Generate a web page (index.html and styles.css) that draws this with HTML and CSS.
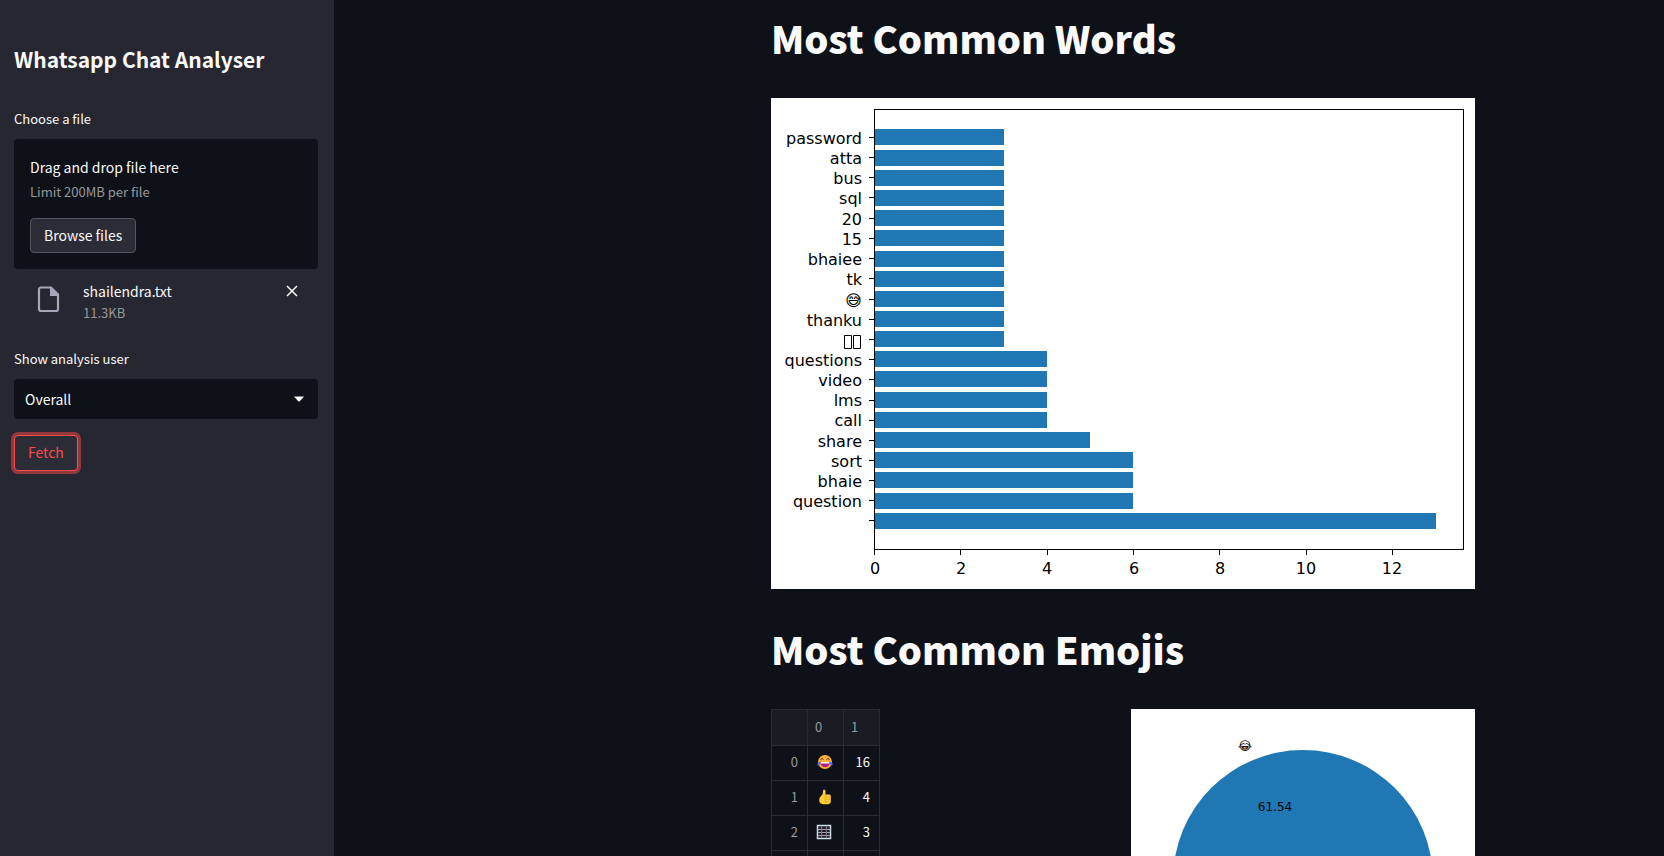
FILE: index.html
```html
<!DOCTYPE html>
<html lang="en">
<head>
<meta charset="utf-8">
<title>Whatsapp Chat Analyser</title>
<link rel="stylesheet" href="styles.css">
</head>
<body>
<div class="app">
  <aside class="sidebar">
    <h1 class="sidebar-title">Whatsapp Chat Analyser</h1>

    <p class="field-label" id="upload-label">Choose a file</p>
    <section class="dropzone" aria-labelledby="upload-label">
      <p class="drop-text">Drag and drop file here</p>
      <p class="drop-limit">Limit 200MB per file</p>
      <button class="button" type="button">Browse files</button>
    </section>
    <div class="file">
      <svg class="file-icon" viewBox="0 0 24 28" aria-hidden="true">
        <path d="M4 2.5h10l7 7v14.500a2 2 0 0 1-2 2H4a2 2 0 0 1-2-2v-19.500a2 2 0 0 1 2-2z" fill="none" stroke="#a3a8b8" stroke-width="2.200"/>
        <path d="M13 2v9h8.500z" fill="#a3a8b8"/>
      </svg>
      <div class="file-info">
        <p class="file-name">shailendra.txt</p>
        <p class="file-size">11.3KB</p>
      </div>
      <button class="file-remove" type="button" aria-label="Remove file">
        <svg viewBox="0 0 12 12" aria-hidden="true"><path d="M1 1l10 10M11 1L1 11" stroke="#fafafa" stroke-width="1.500"/></svg>
      </button>
    </div>

    <label class="field-label" for="user">Show analysis user</label>
    <div class="select">
      <select id="user"><option>Overall</option></select>
      <svg class="select-arrow" viewBox="0 0 10 6" aria-hidden="true"><path d="M0 .5h10L6 5q-1 1-2 0z" fill="#fafafa"/></svg>
    </div>
    <button class="button button-focus" type="button">Fetch</button>
  </aside>

  <main class="main">
    <div class="content">
      <h2 class="heading">Most Common Words</h2>
      <svg class="figure" viewBox="0 0 704 491" role="img" aria-label="Most common words">
        <rect width="704" height="491" fill="#fff"/>
        <g fill="#1f77b4">
          <rect x="103" y="31" width="130" height="16"/>
          <rect x="103" y="52" width="130" height="16"/>
          <rect x="103" y="72" width="130" height="16"/>
          <rect x="103" y="92" width="130" height="16"/>
          <rect x="103" y="112" width="130" height="16"/>
          <rect x="103" y="132" width="130" height="16"/>
          <rect x="103" y="153" width="130" height="16"/>
          <rect x="103" y="173" width="130" height="16"/>
          <rect x="103" y="193" width="130" height="16"/>
          <rect x="103" y="213" width="130" height="16"/>
          <rect x="103" y="233" width="130" height="16"/>
          <rect x="103" y="253" width="173" height="16"/>
          <rect x="103" y="273" width="173" height="16"/>
          <rect x="103" y="294" width="173" height="16"/>
          <rect x="103" y="314" width="173" height="16"/>
          <rect x="103" y="334" width="216" height="16"/>
          <rect x="103" y="354" width="259" height="16"/>
          <rect x="103" y="374" width="259" height="16"/>
          <rect x="103" y="395" width="259" height="16"/>
          <rect x="103" y="415" width="562" height="16"/>
        </g>
        <g class="axis">
          <rect x="103.500" y="11.500" width="589" height="440"/>
          <path d="M98 39.500h5M98 59.500h5M98 79.500h5M98 99.500h5M98 120.500h5M98 140.500h5M98 160.500h5M98 180.500h5M98 201.500h5M98 221.500h5M98 241.500h5M98 261.500h5M98 281.500h5M98 302.500h5M98 322.500h5M98 342.500h5M98 362.500h5M98 382.500h5M98 402.500h5M98 422.500h5"/>
          <path d="M103.500 452v5M189.500 452v5M276.500 452v5M362.500 452v5M448.500 452v5M535.500 452v5M621.500 452v5"/>
        </g>
        <g class="tick tick-y">
          <text x="91" y="46">password</text>
          <text x="91" y="66">atta</text>
          <text x="91" y="86">bus</text>
          <text x="91" y="106">sql</text>
          <text x="91" y="127">20</text>
          <text x="91" y="147">15</text>
          <text x="91" y="167">bhaiee</text>
          <text x="91" y="187">tk</text>
          <text x="91" y="208">😅</text>
          <text x="91" y="228">thanku</text>
          <text x="91" y="268">questions</text>
          <text x="91" y="288">video</text>
          <text x="91" y="308">lms</text>
          <text x="91" y="328">call</text>
          <text x="91" y="349">share</text>
          <text x="91" y="369">sort</text>
          <text x="91" y="389">bhaie</text>
          <text x="91" y="409">question</text>
        </g>
        <path class="missing" d="M73.500 237.500h7v13h-7zM82.500 237.500h7v13h-7z"/>
        <g class="tick tick-x">
          <text x="104" y="476">0</text>
          <text x="190" y="476">2</text>
          <text x="276" y="476">4</text>
          <text x="363" y="476">6</text>
          <text x="449" y="476">8</text>
          <text x="535" y="476">10</text>
          <text x="621" y="476">12</text>
        </g>
      </svg>

      <h2 class="heading">Most Common Emojis</h2>
      <div class="columns">
        <div>
          <table class="table">
            <thead>
              <tr><th></th><th>0</th><th>1</th></tr>
            </thead>
            <tbody>
              <tr>
                <th>0</th>
                <td><svg class="emoji" viewBox="0 0 16 16" role="img" aria-label="Face with tears of joy">
                  <circle cx="8" cy="8" r="7" fill="#fdae33"/>
                  <path d="M3.500 5.500q1.500-2 3 0M9.500 5.500q1.500-2 3 0" fill="none" stroke="#5c2f1b"/>
                  <path d="M3.500 8h9q0 5-4.500 5t-4.500-5z" fill="#b5178c"/>
                  <path d="M4 8h8v1.500H4z" fill="#fff"/>
                  <path d="M3.500 7.500q0 4-2 4Q0 11.500.5 9.500q1-1.500 3-2zM12.500 7.500q0 4 2 4 1.500 0 1-2-1-1.500-3-2z" fill="#4a72f0"/>
                </svg></td>
                <td>16</td>
              </tr>
              <tr>
                <th>1</th>
                <td><svg class="emoji" viewBox="0 0 16 16" role="img" aria-label="Thumbs up">
                  <path d="M6 1q2-1.500 2.500 1L8.500 5.500h4q1.500.3 1.300 1.800V13q-.3 2-2.500 2.200H6Q2 15 2.200 11q0-3 2.300-4.500Q6.500 4.500 6 1z" fill="#fdcb32"/>
                  <path d="M8.500 8h5M8.500 10.500h5M8.500 13h5M8.500 6q-1.500 4 0 8" fill="none" stroke="#e39d23" stroke-width=".6"/>
                </svg></td>
                <td>4</td>
              </tr>
              <tr>
                <th>2</th>
                <td><svg class="emoji emoji-start" viewBox="0 0 16 16" role="img" aria-label="Light skin tone">
                  <rect x="1.500" y="1.500" width="13" height="13" fill="#24202b" stroke="#c9dbe2" stroke-width="1.500"/>
                  <path d="M2 5.500h12M2 8.500h12M2 11.500h12" stroke="#a9a2b4"/>
                  <path d="M5.500 2v12M10.500 2v12" stroke="#7d7489"/>
                </svg></td>
                <td>3</td>
              </tr>
              <tr><th></th><td></td><td></td></tr>
            </tbody>
          </table>
        </div>
        <svg class="figure" viewBox="0 0 344 344" role="img" aria-label="Most common emojis">
          <rect width="344" height="344" fill="#fff"/>
          <circle cx="172" cy="171" r="130" fill="#1f77b4"/>
          <text class="pie-text pie-label" x="121" y="41">😂</text>
          <text class="pie-text pie-value" x="144" y="102">61.54</text>
        </svg>
      </div>
    </div>
  </main>
</div>
</body>
</html>
```
FILE: styles.css
```css
* { box-sizing: border-box; }

body, h1, h2, p { margin: 0; }

body {
  background: #0e1117;
  color: #fafafa;
  font-family: "Source Sans Pro", "Noto Sans CJK JP", sans-serif;
  font-size: 14px;
  line-height: 20px;
}

button, select { font: inherit; color: inherit; }

.app {
  display: grid;
  grid-template-columns: 334px 1fr;
  height: 100vh;
}

.sidebar {
  background: #262730;
  padding: 45px 16px 16px 14px;
  overflow: hidden;
}

.sidebar-title {
  margin-bottom: 36px;
  font-size: 21px;
  line-height: 28px;
  font-weight: 600;
}

.field-label {
  display: block;
  margin-bottom: 10px;
  font-size: 13px;
}

.dropzone {
  padding: 16px;
  border-radius: 4px;
  background: #0e1117;
}

.drop-text { line-height: 24px; margin-bottom: 3px; }

.drop-limit, .file-size { font-size: 13px; color: #98989b; }

.drop-limit { margin-bottom: 16px; }

.button {
  display: block;
  height: 35px;
  padding: 0 13px 2px;
  border: 1px solid #54555d;
  border-radius: 4px;
  background: #2b2c36;
}

.button-focus {
  height: 36px;
  border-color: #ff4b4b;
  color: #ff4b4b;
  box-shadow: 0 0 0 3px rgba(255, 75, 75, 0.5);
}

.file {
  display: flex;
  align-items: flex-start;
  gap: 22px;
  padding: 12px 20px 0 23px;
  margin-bottom: 26px;
}

.file-icon { width: 24px; height: 28px; margin-top: 4px; }

.file-info { flex: 1; }

.file-name { margin-bottom: 2px; }

.file-remove {
  display: flex;
  padding: 0;
  margin-top: 4px;
  border: 0;
  background: none;
}

.file-remove svg { width: 12px; height: 12px; }

.select {
  display: grid;
  align-items: center;
  margin-bottom: 16px;
}

.select > * { grid-area: 1 / 1; }

.select select {
  height: 40px;
  width: 100%;
  padding: 0 11px;
  border: 0;
  border-radius: 4px;
  background: #0e1117;
  appearance: none;
}

.select-arrow {
  width: 10px;
  height: 6px;
  justify-self: end;
  margin-right: 14px;
  pointer-events: none;
}

.main {
  display: grid;
  grid-template-columns: 437fr minmax(0, 704px) 189fr;
  overflow-y: auto;
  scrollbar-width: none;
}

.content { grid-column: 2; }

.heading {
  padding: 34px 0;
  font-size: 38px;
  line-height: 52px;
  font-weight: 900;
}

.heading:first-child { padding-top: 12px; }

.figure { display: block; width: 100%; }

.axis { fill: none; stroke: #000; }

.tick { font: 16px "DejaVu Sans", sans-serif; fill: #000; }

.tick-y { text-anchor: end; }

.tick-x { text-anchor: middle; }

.missing { fill: none; stroke: #000; }

.pie-text { font: 12px "DejaVu Sans", sans-serif; fill: #000; }

.pie-label { text-anchor: end; }

.pie-value { text-anchor: middle; }

.columns {
  display: grid;
  grid-template-columns: 1fr 1fr;
  gap: 16px;
}

.table {
  border-collapse: collapse;
  font-size: 13px;
}

.table th, .table td {
  width: 36px;
  height: 35px;
  padding: 0 9px 2px 8px;
  border: 1px solid #292b31;
  text-align: right;
  font-weight: 400;
}

.table th { color: #98989b; }

.table thead th {
  height: 36px;
  padding: 0 7px 2px;
  background: #1a1c24;
  text-align: left;
}

.emoji { display: block; width: 16px; height: 16px; margin: 0 auto; }

.emoji-start { margin: 0; }
```
